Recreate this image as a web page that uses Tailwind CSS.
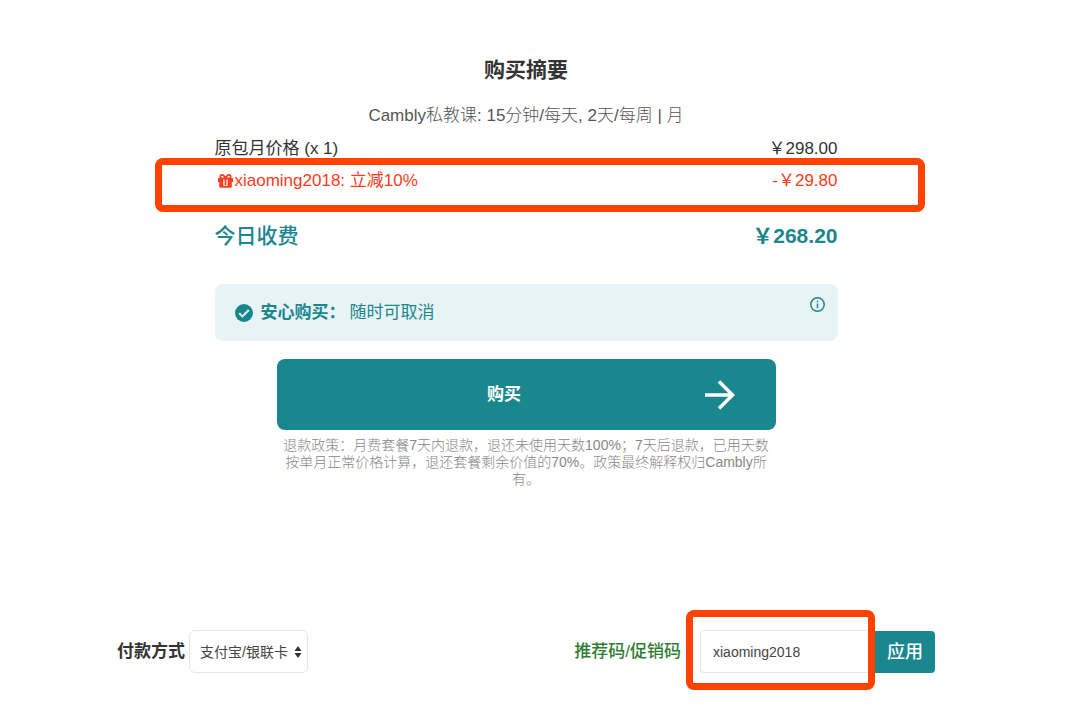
<!DOCTYPE html>
<html lang="zh-CN">
<head>
<meta charset="utf-8">
<meta name="viewport" content="width=device-width, initial-scale=1">
<title>购买摘要</title>
<script src="https://cdn.jsdelivr.net/npm/@tailwindcss/browser@4"></script>
</head>
<body class="min-h-screen bg-white font-['Liberation_Sans','Noto_Sans_CJK_SC',sans-serif] text-[17px] leading-6 text-[#333]">
<main class="mx-auto w-full max-w-[846px] pt-14 pr-7 pb-6">
  <section class="mx-auto w-full max-w-[623px]">
    <h1 class="text-center text-[21px] leading-7 font-bold">购买摘要</h1>
    <p class="mt-5 text-center font-light text-[#555]">Cambly私教课: 15分钟/每天, 2天/每周 | 月</p>
    <dl class="mt-[9px]">
      <div class="flex justify-between">
        <dt>原包月价格 (x 1)</dt>
        <dd>￥298.00</dd>
      </div>
      <div class="relative mt-2 flex justify-between text-[#ff3b20]">
        <dt class="flex items-center gap-[2px] pl-[3px]">
          <svg class="h-[14px] w-[15px]" viewBox="0 0 15 14" fill="none" aria-hidden="true">
            <path d="M7.500 4.300C6.400 1.700 5.200.9 4 .9 2.900.9 2.200 1.600 2.200 2.600S3 4.300 4.200 4.300H10.800C12 4.300 12.800 3.600 12.800 2.600S12.100.9 11 .9C9.800.9 8.600 1.700 7.500 4.300Z" stroke="currentColor" stroke-width="1.600"/>
            <path fill="currentColor" fill-rule="evenodd" d="M.8 4H14.200Q15 4 15 4.800V8H13.800V12.500Q13.800 13.700 12.600 13.700H2.400Q1.200 13.700 1.200 12.500V8H0V4.800Q0 4 .8 4ZM5.300 5.500V11.800H9.700V5.500Z"/>
            <path fill="currentColor" d="M6.600 5H8.400V11H6.600Z"/>
          </svg>
          <span>xiaoming2018: 立减10%</span>
        </dt>
        <dd>-￥29.80</dd>
        <span class="pointer-events-none absolute -top-[11px] -right-[87px] -left-[60px] h-[54px] rounded-lg border-[7px] border-[#ff4200]"></span>
      </div>
      <div class="mt-[29px] flex justify-between text-[21px] leading-7 font-bold text-[#1a878e]">
        <dt class="font-medium">今日收费</dt>
        <dd>￥268.20</dd>
      </div>
    </dl>
    <div class="mt-[34px] flex items-start rounded-lg bg-[#e7f3f4] pt-[17px] pr-3 pb-4 pl-5 text-[#1a878e]">
      <svg class="mt-[3px] mr-2 size-[18px]" viewBox="0 0 18 18" aria-hidden="true">
        <circle cx="9" cy="9" r="9" fill="currentColor"/>
        <path d="M4.200 9.300L7.400 12.400 13.800 6" fill="none" stroke="#e7f3f4" stroke-width="2"/>
      </svg>
      <strong class="font-bold">安心购买：</strong>
      <span class="ml-1">随时可取消</span>
      <button type="button" aria-label="详情" class="-mt-[5px] ml-auto">
        <svg class="size-[17px]" viewBox="0 0 17 17" aria-hidden="true">
          <circle cx="8.500" cy="8.500" r="6.700" fill="none" stroke="currentColor" stroke-width="1.500"/>
          <path d="M8.500 7.500V12.300M8.500 4.700V6.300" stroke="currentColor" stroke-width="1.500"/>
        </svg>
      </button>
    </div>
    <div class="mx-auto mt-[18px] w-full max-w-[499px]">
      <button type="button" class="flex h-[71px] w-full items-center rounded-lg bg-[#1a878e] pr-10 pl-7 text-white">
        <span class="flex-1 font-bold">购买</span>
        <svg class="size-8" viewBox="0 0 32 32" fill="none" stroke="currentColor" stroke-width="3.500" aria-hidden="true">
          <path d="M1 16H28M15 2.500L28.500 16 15 29.500"/>
        </svg>
      </button>
      <p class="mt-[7px] text-center text-[14px] leading-[17px] font-light text-[#888]">退款政策：月费套餐7天内退款，退还未使用天数100%；7天后退款，已用天数按单月正常价格计算，退还套餐剩余价值的70%。政策最终解释权归Cambly所有。</p>
    </div>
  </section>
  <section class="mt-[142px] flex flex-wrap items-center justify-between gap-y-8">
    <div class="flex items-center gap-1">
      <label for="payment" class="font-bold">付款方式</label>
      <div class="relative">
        <select id="payment" class="h-[43px] w-[119px] appearance-none rounded-md border border-[#e6e6e6] bg-white pl-[10px] text-[14px] text-[#444]">
          <option>支付宝/银联卡</option>
        </select>
        <svg class="pointer-events-none absolute top-4 right-[6px] h-3 w-2" viewBox="0 0 8 12" fill="#333" aria-hidden="true"><path d="M4 0L7.500 5H.5ZM4 12L.5 7H7.500Z"/></svg>
      </div>
    </div>
    <form class="flex items-center">
      <label for="promo" class="mr-[19px] font-medium text-[#2e7d32]">推荐码/促销码</label>
      <div class="relative">
        <input id="promo" type="text" value="xiaoming2018" class="block h-[43px] w-[175px] rounded-l-sm border border-[#e6e6e6] px-3 text-[14px] text-[#444]">
        <span class="pointer-events-none absolute -top-5 right-0 -bottom-[17px] -left-[14px] rounded-lg border-[7px] border-[#ff4200]"></span>
      </div>
      <button type="button" class="h-[42px] rounded-r-sm bg-[#1a878e] px-3 text-[18px] font-medium text-white">应用</button>
    </form>
  </section>
</main>
</body>
</html>
